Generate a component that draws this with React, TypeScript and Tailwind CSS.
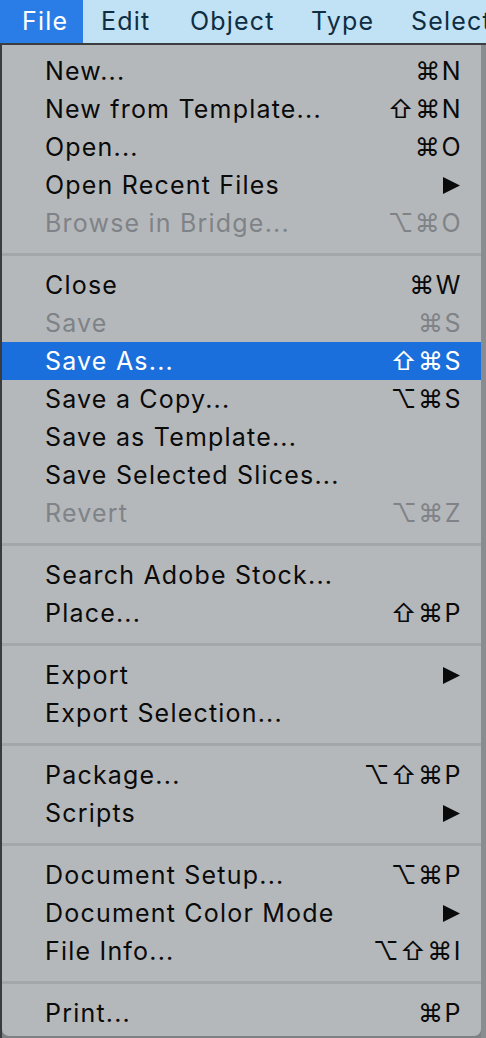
import React from "react";

type Item = { label: string; shortcut?: string; disabled?: boolean; sub?: boolean; active?: boolean };

const groups: Item[][] = [
  [
    { label: "New...", shortcut: "⌘N" },
    { label: "New from Template...", shortcut: "⇧⌘N" },
    { label: "Open...", shortcut: "⌘O" },
    { label: "Open Recent Files", sub: true },
    { label: "Browse in Bridge...", shortcut: "⌥⌘O", disabled: true },
  ],
  [
    { label: "Close", shortcut: "⌘W" },
    { label: "Save", shortcut: "⌘S", disabled: true },
    { label: "Save As...", shortcut: "⇧⌘S", active: true },
    { label: "Save a Copy...", shortcut: "⌥⌘S" },
    { label: "Save as Template..." },
    { label: "Save Selected Slices..." },
    { label: "Revert", shortcut: "⌥⌘Z", disabled: true },
  ],
  [
    { label: "Search Adobe Stock..." },
    { label: "Place...", shortcut: "⇧⌘P" },
  ],
  [
    { label: "Export", sub: true },
    { label: "Export Selection..." },
  ],
  [
    { label: "Package...", shortcut: "⌥⇧⌘P" },
    { label: "Scripts", sub: true },
  ],
  [
    { label: "Document Setup...", shortcut: "⌥⌘P" },
    { label: "Document Color Mode", sub: true },
    { label: "File Info...", shortcut: "⌥⇧⌘I" },
  ],
  [{ label: "Print...", shortcut: "⌘P" }],
];

function Row({ item }: { item: Item }) {
  const color = item.active ? "text-white" : item.disabled ? "text-[#7f8387]" : "text-[#0a0a0a]";
  return (
    <div
      className={`flex items-center justify-between h-[38px] pl-[43px] pr-[19px] ${
        item.active ? "bg-[#1b6fdc]" : ""
      } ${color}`}
    >
      <span className="text-[25px] leading-none tracking-[1.2px] whitespace-nowrap">{item.label}</span>
      {item.shortcut && (
        <span
          className="text-[25px] leading-none tracking-[1.5px]"
          style={{ fontFamily: "Inter, 'DejaVu Sans', sans-serif" }}
        >
          {item.shortcut}
        </span>
      )}
      {item.sub && (
        <svg width="19" height="19" viewBox="0 0 19 19" className="mr-[1px]">
          <polygon points="1,1 18,9.5 1,18" fill="currentColor" />
        </svg>
      )}
    </div>
  );
}

export default function App() {
  return (
    <div
      className="w-[486px] h-[1038px] bg-[#7e8184] overflow-hidden flex flex-col"
      style={{ fontFamily: "Inter, 'Liberation Sans', sans-serif" }}
    >
      <div className="h-[43px] bg-[#c0e2f4] flex items-center text-[25px] tracking-[1.2px] text-[#0f2d42] shrink-0 whitespace-nowrap overflow-hidden">
        <div className="h-full bg-[#2a7de6] text-white flex items-center pl-[22px] w-[83px] shrink-0">File</div>
        <span className="ml-[18px] w-[89px] shrink-0">Edit</span>
        <span className="w-[121px] shrink-0">Object</span>
        <span className="w-[100px] shrink-0">Type</span>
        <span className="shrink-0">Select</span>
      </div>
      <div className="h-[2px] bg-[#3c3d3f] shrink-0" />
      <div className="flex flex-1">
        <div className="w-[2px] bg-[#3a3b3d]" />
        <div className="w-[479px] h-[991px] bg-[#b5b8bb] rounded-b-[7px] pt-[7px]">
          {groups.map((g, gi) => (
            <div key={gi}>
              {gi > 0 && (
                <div className="h-[24px] flex items-center">
                  <div className="h-[3px] w-full bg-[#a4a7aa]" />
                </div>
              )}
              {g.map((it) => (
                <Row key={it.label} item={it} />
              ))}
            </div>
          ))}
        </div>
        <div className="flex-1 bg-[#8a8d90]" />
      </div>
    </div>
  );
}
